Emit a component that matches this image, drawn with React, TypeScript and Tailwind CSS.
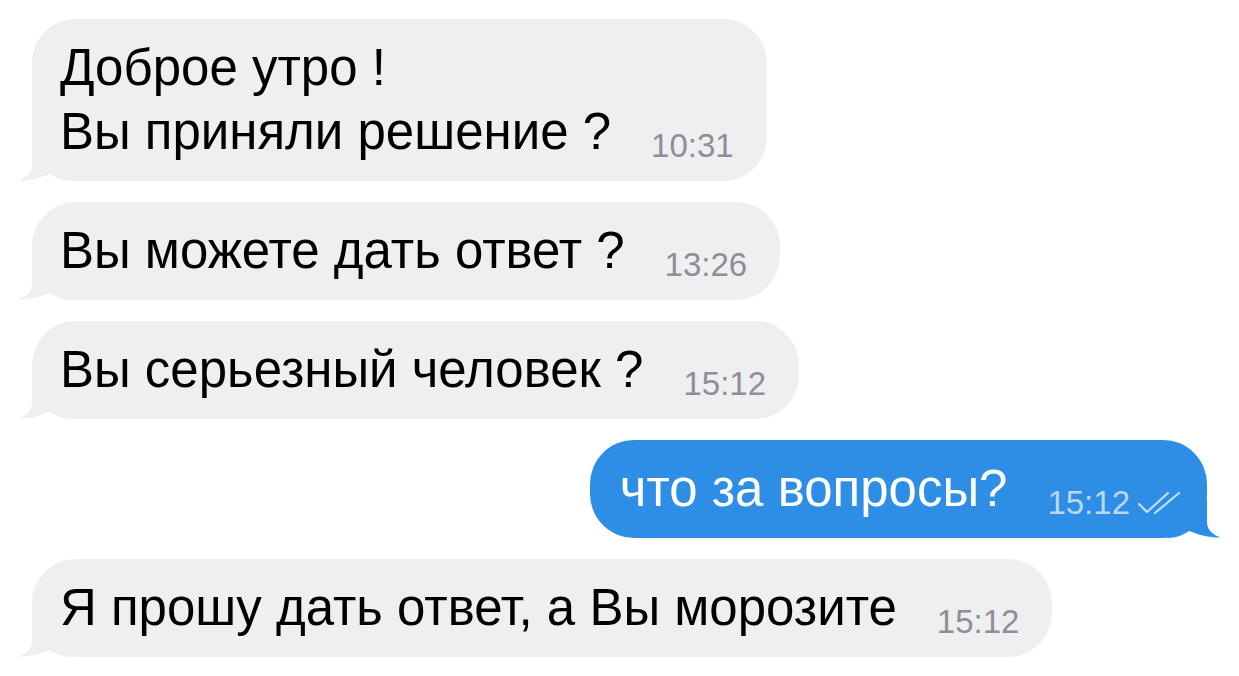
import React from "react";

type Msg = { lines: string[]; time: string; out?: boolean };

const messages: Msg[] = [
  { lines: ["Доброе утро !", "Вы приняли решение ?"], time: "10:31" },
  { lines: ["Вы можете дать ответ ?"], time: "13:26" },
  { lines: ["Вы серьезный человек ?"], time: "15:12" },
  { lines: ["что за вопросы?"], time: "15:12", out: true },
  { lines: ["Я прошу дать ответ, а Вы морозите"], time: "15:12" },
];

function Tail({ out }: { out?: boolean }) {
  return (
    <svg
      width="54"
      height="40"
      viewBox="0 0 54 40"
      className={out ? "absolute bottom-0 right-[-14px] -scale-x-100" : "absolute bottom-0 left-[-14px]"}
    >
      <path
        d="M14 0 L14 24 C14 32 8 37 0 39.5 C10 40 22 37 32 33 C38 37 44 40 54 40 L54 0 Z"
        fill={out ? "#2e8ee6" : "#efeff2"}
      />
    </svg>
  );
}

function Ticks() {
  return (
    <svg width="46" height="24" viewBox="0 0 46 24" className="inline-block ml-[6px] align-[-1px]">
      <path d="M3 13 L11 21 L32 2" fill="none" stroke="#c2ddf7" strokeWidth="2.2" strokeLinecap="round" strokeLinejoin="round" />
      <path d="M19 22 L43 2" fill="none" stroke="#c2ddf7" strokeWidth="2.2" strokeLinecap="round" />
    </svg>
  );
}

function Bubble({ m }: { m: Msg }) {
  const last = m.lines.length - 1;
  return (
    <div className={m.out ? "flex justify-end pr-[32px]" : "flex justify-start pl-[32px]"}>
      <div
        className={
          "relative rounded-[44px] py-[17px] " +
          (m.out ? "bg-[#2e8ee6] text-white pl-[30px] pr-[25px]" : "bg-[#efeff2] text-black pl-[28px] pr-[33px]")
        }
      >
        <Tail out={m.out} />
        <div className="relative text-[51px] leading-[64px] whitespace-nowrap">
          {m.lines.map((l, i) => (
            <div key={i}>
              {l}
              {i === last && (
                <span
                  className={
                    "relative top-[8px] inline-block text-[33px] leading-none " +
                    (m.out ? "ml-[40px] text-[#b9d8f6]" : "ml-[40px] text-[#8e8e93]")
                  }
                >
                  {m.time}
                  {m.out && <Ticks />}
                </span>
              )}
            </div>
          ))}
        </div>
      </div>
    </div>
  );
}

export default function App() {
  return (
    <div
      className="w-[1239px] h-[676px] bg-white pt-[19px] flex flex-col gap-[21px] overflow-hidden"
      style={{ fontFamily: '"Liberation Sans", Arial, sans-serif' }}
    >
      {messages.map((m, i) => (
        <Bubble key={i} m={m} />
      ))}
    </div>
  );
}
